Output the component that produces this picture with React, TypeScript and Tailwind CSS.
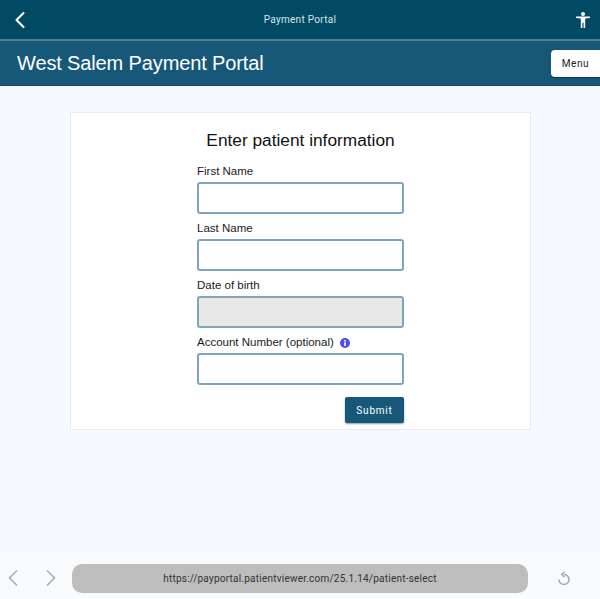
import { ChevronLeft, ChevronRight } from 'lucide-react';

const sans = { fontFamily: '"Liberation Sans", Arial, sans-serif' };

function Field({ label, disabled, info }: { label: string; disabled?: boolean; info?: boolean }) {
  return (
    <div className="flex flex-col">
      <div className="h-[25px] flex items-center gap-[6px] text-[11.5px] text-[#1a1a1a] pt-[4px]">
        {label}
        {info && (
          <svg viewBox="0 0 12 12" className="w-[10px] h-[10px]">
            <circle cx="6" cy="6" r="6" fill="#4a4ef0" />
            <rect x="5" y="5" width="2" height="4.5" fill="#fff" />
            <rect x="5" y="2.4" width="2" height="1.8" fill="#fff" />
          </svg>
        )}
      </div>
      <div
        className={`h-[32px] rounded-[3px] border-2 border-[#7fa5ba] ${disabled ? 'bg-[#e8e8e8]' : 'bg-white'}`}
      />
    </div>
  );
}

export default function App() {
  return (
    <div style={sans} className="w-[600px] h-[599px] flex flex-col bg-[#f5faff] overflow-hidden">
      {/* Top bar */}
      <div className="h-[41px] shrink-0 bg-[#004a64] border-b-2 border-[#5a7a8a] flex items-center justify-between pl-[6px]">
        <ChevronLeft className="w-[28px] h-[28px] text-white" strokeWidth={1.8} />
        <span className="text-[10px] tracking-[0.3px] text-[#dbe6ea]" style={{ fontFamily: 'Roboto, sans-serif' }}>
          Payment Portal
        </span>
        <div className="w-[34px] flex justify-center">
          <svg viewBox="0 0 14 16" className="w-[14px] h-[16px]" fill="#fff">
            <circle cx="7" cy="2" r="2" />
            <path d="M0 4.6h14v1.3L9.2 6.6V16H7.6v-5.2H6.4V16H4.8V6.6L0 5.9z" />
          </svg>
        </div>
      </div>

      {/* Title bar */}
      <div className="h-[45px] shrink-0 bg-[#175878] border-b border-[#0f4a66] flex items-center justify-between pl-[17px]">
        <h1 className="text-[20px] tracking-[-0.13px] text-white">West Salem Payment Portal</h1>
        <button
          className="w-[49px] h-[27px] rounded-l-[4px] bg-white text-[10px] tracking-[0.6px] text-[#1a1a1a] shadow-[0_1px_1px_rgba(0,0,0,0.4)]"
          style={{ fontFamily: 'Roboto, sans-serif' }}
        >
          Menu
        </button>
      </div>

      {/* Content */}
      <div className="flex-1 pt-[26px] pl-[70px]">
        <div className="w-[461px] h-[318px] bg-white border border-[#e4ecf1] flex flex-col items-center">
          <h2 className="text-[17.3px] text-[#111] mt-[15px] mb-[5px] leading-[24px]">Enter patient information</h2>
          <div className="w-[207px] flex flex-col">
            <Field label="First Name" />
            <Field label="Last Name" />
            <Field label="Date of birth" disabled />
            <Field label="Account Number (optional)" info />
            <div className="flex justify-end mt-[12px]">
              <button
                className="w-[59px] h-[26px] rounded-[2px] bg-[#175878] text-[10px] tracking-[0.8px] text-white shadow-[0_1px_2px_rgba(0,0,0,0.4)]"
                style={{ fontFamily: 'Roboto, sans-serif' }}
              >
                Submit
              </button>
            </div>
          </div>
        </div>
      </div>

      {/* Browser bar */}
      <div className="h-[42px] shrink-0 bg-[#f9fafc] flex items-center pr-[29px]">
        <ChevronLeft className="w-[28px] h-[28px] -ml-[1px] text-[#a8a8a8]" strokeWidth={1.3} />
        <ChevronRight className="w-[28px] h-[28px] ml-[10px] text-[#a8a8a8]" strokeWidth={1.3} />
        <div
          className="w-[456px] h-[29px] ml-[7px] rounded-[10px] bg-[#bdbdbd] flex items-center justify-center text-[10px] tracking-[0.23px] text-[#333]"
          style={{ fontFamily: 'Roboto, sans-serif' }}
        >
          https://payportal.patientviewer.com/25.1.14/patient-select
        </div>
        <svg
          viewBox="0 0 14 15"
          className="w-[14px] h-[15px] ml-auto"
          fill="none"
          stroke="#a8a8a8"
          strokeWidth="1.5"
        >
          <path d="M7 3.5A5 5 0 1 1 2 8.5" />
          <path d="M7.5 0.8 4.8 3.5 7.5 6.2" />
        </svg>
      </div>
    </div>
  );
}
